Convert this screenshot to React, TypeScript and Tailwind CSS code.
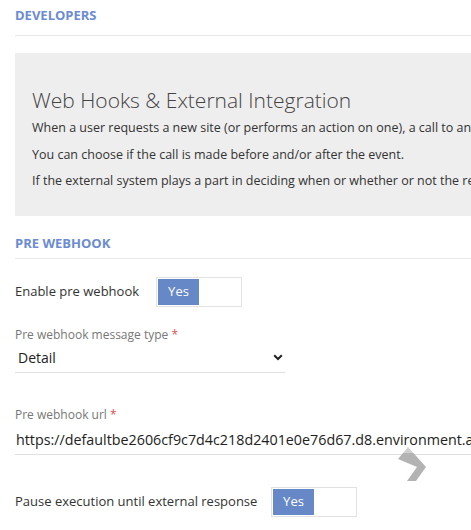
import React from 'react';

function Toggle({ on = true }: { on?: boolean }) {
  return (
    <div className="flex h-[30px] w-[86px] border border-[#e2e2e2] bg-white p-px">
      <div className={on ? 'flex w-[41px] items-center justify-center bg-[#6788c7] text-[13px] text-white' : 'w-[41px]'}>
        {on ? 'Yes' : ''}
      </div>
    </div>
  );
}

function SectionHeader({ title, className }: { title: string; className: string }) {
  return (
    <div className={'border-b border-[#e8e8e8] text-[13px] font-bold leading-[20px] text-[#6b8bd2] ' + className}>
      {title}
    </div>
  );
}

export default function App() {
  return (
    <div
      className="relative h-[530px] w-[471px] overflow-hidden bg-white pl-[15px] text-[#333]"
      style={{ fontFamily: '"Open Sans", "Noto Sans", sans-serif' }}
    >
      <SectionHeader title="DEVELOPERS" className="pb-[10px] pt-[5px]" />

      <div className="mt-[17px] h-[163px] whitespace-nowrap bg-[#eeeeee] pl-[17px] pt-[32px]">
        <h1 className="text-[21px] font-light leading-[30px] text-[#444]">Web Hooks &amp; External Integration</h1>
        <p className="mt-[4px] text-[12.5px] leading-[18px]">
          When a user requests a new site (or performs an action on one), a call to an external system can be made.
        </p>
        <p className="mt-[9px] text-[12.5px] leading-[18px]">You can choose if the call is made before and/or after the event.</p>
        <p className="mt-[8px] text-[12.5px] leading-[18px]">
          If the external system plays a part in deciding when or whether or not the request proceeds, pause execution.
        </p>
      </div>

      <SectionHeader title="PRE WEBHOOK" className="mt-[17px] pb-[5px]" />

      <div className="mt-[18px] flex items-center">
        <span className="w-[141px] text-[13px]">Enable pre webhook</span>
        <Toggle />
      </div>

      <div className="mt-[19px] w-[270px]">
        <label className="block text-[12px] leading-[18px] text-[#777]">
          Pre webhook message type <span className="text-[#d9534f]">*</span>
        </label>
        <div className="mt-[3px] flex items-center justify-between border-b border-[#e0e0e0] pb-[4px] pl-[3px] pr-[2px]">
          <span className="text-[14px] leading-[21px] text-[#222]">Detail</span>
          <svg width="10" height="7" viewBox="0 0 10 7">
            <path d="M1.2 1.2 L5 5 L8.8 1.2" fill="none" stroke="#222" strokeWidth="2" />
          </svg>
        </div>
      </div>

      <div className="mt-[33px]">
        <label className="block text-[12px] leading-[18px] text-[#777]">
          Pre webhook url <span className="text-[#d9534f]">*</span>
        </label>
        <div className="mt-[3px] whitespace-nowrap border-b border-[#e0e0e0] pb-[3px] pl-[1px]">
          <span className="text-[14.3px] leading-[21px] text-[#222]">
            https://defaultbe2606cf9c7d4c218d2401e0e76d67.d8.environment.api.powerplatform.com
          </span>
        </div>
      </div>

      <div className="mt-[32px] flex items-center">
        <span className="w-[256px] text-[13px]">Pause execution until external response</span>
        <Toggle />
      </div>

      <svg className="absolute left-[396px] top-[444px]" width="34" height="40" viewBox="0 0 34 40">
        <defs>
          <linearGradient id="arrowFill" gradientUnits="userSpaceOnUse" x1="0" y1="0" x2="0" y2="40">
            <stop offset="0.225" stopColor="#d0d0d0" />
            <stop offset="0.225" stopColor="#b3b3b3" />
          </linearGradient>
        </defs>
        <polygon points="2,15 12,3 30,23 20,37 11,37 21,23" fill="url(#arrowFill)" />
      </svg>
    </div>
  );
}
